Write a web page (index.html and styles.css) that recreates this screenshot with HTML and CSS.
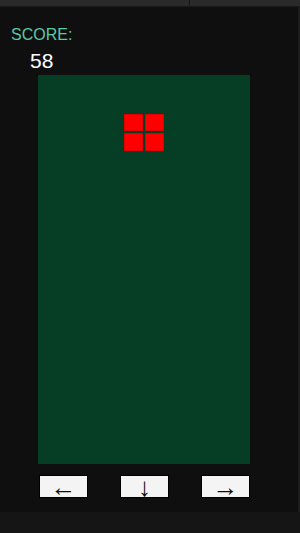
FILE: index.html
```html
<!DOCTYPE html>
<html lang="en">
<head>
    <meta charset="UTF-8">
    <meta name="viewport" content="width=device-width, initial-scale=1.0">
    <title>Tetris</title>
    <link rel="stylesheet" href="styles.css">
</head>
<body>
    <div class="topbar">
        <div class="tab"></div>
        <div class="tab"></div>
    </div>
    <div class="game">
        <div class="score-label">SCORE:</div>
        <div class="score" id="score">58</div>
        <div class="board" id="board">
            <div class="cell" style="grid-column: 5; grid-row: 3;"></div>
            <div class="cell" style="grid-column: 6; grid-row: 3;"></div>
            <div class="cell" style="grid-column: 5; grid-row: 4;"></div>
            <div class="cell" style="grid-column: 6; grid-row: 4;"></div>
        </div>
        <div class="controls">
            <button class="ctrl-button">&larr;</button>
            <button class="ctrl-button">&darr;</button>
            <button class="ctrl-button">&rarr;</button>
        </div>
    </div>
    <div class="footer"></div>
</body>
</html>
```

FILE: styles.css
```css
body {
    font-family: "Liberation Sans", Arial, sans-serif;
    margin: 0;
    padding: 0;
    background-color: #0f0f0f;
    width: 300px;
    height: 533px;
    overflow: hidden;
}
.topbar {
    display: flex;
    height: 6px;
    background-color: #2a2a2a;
    border-bottom: 1px solid #1a1a1a;
}
.tab {
    flex: 1;
}
.tab:first-child {
    flex: 0 0 189px;
    border-right: 1px solid #141414;
}
.game {
    height: 505px;
    box-sizing: border-box;
    padding-top: 19px;
    border-right: 2px solid #1c1c1c;
}
.score-label {
    color: #5cc9a7;
    font-size: 16px;
    line-height: 17px;
    margin-left: 11px;
}
.score {
    color: white;
    font-size: 21px;
    line-height: 23px;
    margin: 6px 0 0 30px;
}
.board {
    display: grid;
    grid-template-columns: repeat(10, 1fr);
    grid-template-rows: repeat(20, 1fr);
    width: 212px;
    height: 389px;
    margin: 3px 0 0 38px;
    background-color: #063d25;
}
.cell {
    margin: 0 1px 2px 1px;
    background-color: #ff0000;
    border: 1px solid #e00000;
}
.controls {
    display: flex;
    gap: 32px;
    margin: 11px 0 0 39px;
}
.ctrl-button {
    width: 49px;
    height: 23px;
    padding: 0;
    background-color: #f4f4f4;
    border: 1px solid #000;
    color: #111;
    font-family: "Liberation Sans", sans-serif;
    font-size: 26px;
    line-height: 20px;
    overflow: visible;
}
.footer {
    height: 21px;
    background-color: #151515;
}
```
